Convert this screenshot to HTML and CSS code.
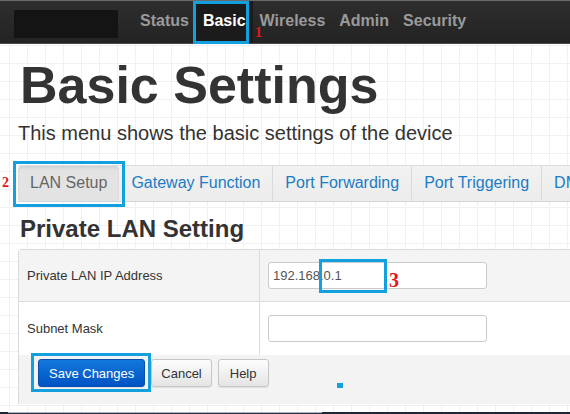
FILE: index.html
```html
<!DOCTYPE html>
<html lang="en">
<head>
<meta charset="utf-8">
<title>Basic Settings</title>
<link rel="stylesheet" href="styles.css">
</head>
<body>
<header class="navbar">
  <div class="brand"></div>
  <nav class="nav">
    <a class="nav-link">Status</a>
    <a class="nav-link active">Basic<span class="callout callout-nav"></span><span class="mark mark-1">1</span></a>
    <a class="nav-link">Wireless</a>
    <a class="nav-link">Admin</a>
    <a class="nav-link">Security</a>
  </nav>
</header>

<main class="page">
  <h1 class="title">Basic Settings</h1>
  <p class="lead">This menu shows the basic settings of the device</p>

  <div class="tabs-wrap">
    <span class="mark mark-2">2</span>
    <span class="callout callout-tab"></span>
    <div class="tabs">
      <a class="tab active">LAN Setup</a>
      <a class="tab">Gateway Function</a>
      <a class="tab">Port Forwarding</a>
      <a class="tab">Port Triggering</a>
      <a class="tab">DMZ</a>
    </div>
  </div>

  <h2 class="section">Private LAN Setting</h2>

  <div class="panel">
    <div class="row shaded">
      <div class="label">Private LAN IP Address</div>
      <div class="field">
        <div class="input">192.168.0.1<span class="callout callout-ip"></span><span class="mark mark-3">3</span></div>
      </div>
    </div>
    <div class="row">
      <div class="label">Subnet Mask</div>
      <div class="field">
        <div class="input"></div>
      </div>
    </div>
    <div class="actions">
      <button class="btn btn-primary">Save Changes<span class="callout callout-save"></span></button>
      <button class="btn btn-cancel">Cancel</button>
      <button class="btn btn-help">Help</button>
      <span class="dot"></span>
    </div>
  </div>
</main>

<div class="taskbar"><div class="taskbar-seg"></div></div>
</body>
</html>
```

FILE: styles.css
```css
* { box-sizing: border-box; }

html, body {
  margin: 0;
  padding: 0;
}

body {
  width: 570px;
  height: 414px;
  overflow: hidden;
  font-family: "Liberation Sans", Arial, Helvetica, sans-serif;
  color: #333;
  background-color: #fff;
  background-image:
    linear-gradient(to right, #f1f1f1 1px, transparent 1px),
    linear-gradient(to bottom, #f1f1f1 1px, transparent 1px);
  background-size: 18px 18px;
  background-position: 9px 9px;
}

/* ---------- top navbar ---------- */
.navbar {
  height: 44px;
  display: flex;
  align-items: stretch;
  background: linear-gradient(to bottom, #2e2e2e 0%, #232323 100%);
  border-top: 1px solid #6a6a6a;
  border-bottom: 1px solid #4a4a4a;
}

.brand {
  width: 104px;
  height: 28px;
  margin: 9px 15px 0 14px;
  background: #141414;
}

.nav {
  display: flex;
  align-items: stretch;
}

.nav-link {
  position: relative;
  display: flex;
  align-items: center;
  padding: 0 7px 2px;
  font-size: 16px;
  font-weight: bold;
  color: #9a9a9a;
  text-decoration: none;
}

.nav-link.active {
  color: #fff;
  background: #1b1b1b;
}

/* ---------- annotations ---------- */
.callout {
  position: absolute;
  border: 3px solid #12a0de;
  pointer-events: none;
  z-index: 2;
}

.callout-nav {
  left: -3px;
  top: 0;
  width: 56px;
  height: 43px;
}

.callout-tab {
  left: -5px;
  top: -4px;
  width: 112px;
  height: 46px;
}

.callout-ip {
  left: 50px;
  top: -4px;
  width: 68px;
  height: 34px;
}

.callout-save {
  left: -8px;
  top: -7px;
  right: -7px;
  bottom: -6px;
}

.mark {
  position: absolute;
  font-family: "Liberation Serif", "Times New Roman", serif;
  font-weight: bold;
  color: #e3161b;
}

.mark-1 {
  left: 59px;
  top: 25px;
  font-size: 14px;
  line-height: 14px;
}

.mark-2 {
  left: -16px;
  top: 11px;
  font-size: 14px;
  line-height: 14px;
}

.mark-3 {
  left: 120px;
  top: 7px;
  font-size: 20px;
  line-height: 20px;
}

/* ---------- page ---------- */
.page {
  padding-left: 18px;
}

.title {
  margin: 11px 0 0 2px;
  font-size: 52px;
  line-height: 60px;
  font-weight: bold;
  color: #333;
}

.lead {
  margin: 6px 0 0 0;
  font-size: 20px;
  line-height: 24px;
  color: #333;
}

.tabs-wrap {
  position: relative;
  margin-top: 20px;
}

.tabs {
  display: flex;
  height: 37px;
  background: linear-gradient(to bottom, #f2f2f2, #ececec);
  border-top: 1px solid #dcdcdc;
  border-bottom: 1px solid #d6d6d6;
  white-space: nowrap;
  overflow: hidden;
}

.tab {
  flex: none;
  display: flex;
  align-items: center;
  padding: 0 12px 1px;
  font-size: 16px;
  color: #1a7cc5;
  border-right: 1px solid #dadada;
  text-decoration: none;
}

.tab.active {
  color: #666;
  background: #e3e3e3;
  border-right: none;
  border-radius: 4px;
  box-shadow: inset 0 2px 3px rgba(0, 0, 0, 0.08);
}

.section {
  margin: 13px 0 0 2px;
  font-size: 24px;
  line-height: 28px;
  font-weight: bold;
  color: #333;
}

/* ---------- panel ---------- */
.panel {
  margin-top: 6px;
  border: 1px solid #dadada;
  border-right: none;
  border-bottom: none;
  border-radius: 4px 0 0 0;
}

.row {
  display: flex;
  height: 52px;
  background: #fff;
  border-bottom: 1px solid #dcdcdc;
}

.row.shaded {
  background: #f4f4f4;
}

.row + .row {
  height: 53px;
  border-bottom: none;
}

.label {
  width: 241px;
  flex: none;
  display: flex;
  align-items: center;
  padding-left: 8px;
  font-size: 13px;
  color: #333;
  border-right: 1px solid #dcdcdc;
}

.field {
  flex: 1;
  display: flex;
  align-items: center;
  padding-left: 8px;
}

.input {
  position: relative;
  width: 219px;
  height: 27px;
  display: flex;
  align-items: center;
  padding: 0 4px;
  font-size: 13px;
  color: #555;
  background: #fff;
  border: 1px solid #cbcbcb;
  border-radius: 3px;
}

.actions {
  position: relative;
  display: flex;
  gap: 6px;
  height: 49px;
  padding: 4px 0 0 19px;
  background: #f3f3f3;
}

.btn {
  position: relative;
  height: 28px;
  padding: 0 10px;
  white-space: nowrap;
  font-family: "Liberation Sans", Arial, Helvetica, sans-serif;
  font-size: 13px;
  color: #333;
  background: linear-gradient(to bottom, #fdfdfd, #e4e4e4);
  border: 1px solid #c6c6c6;
  border-radius: 3px;
  box-shadow: 0 1px 1px rgba(0, 0, 0, 0.08);
}

.btn-primary {
  padding: 0 10px;
  color: #fff;
  background: linear-gradient(to bottom, #1378dd, #0053c3);
  border-color: #0a4fb0;
}

.btn-cancel {
  padding: 0 9px;
}

.btn-help {
  padding: 0 11px;
}

.dot {
  position: absolute;
  left: 318px;
  top: 28px;
  width: 6px;
  height: 5px;
  background: #12a0de;
}

/* ---------- bottom strip ---------- */
.taskbar {
  margin-top: 8px;
  height: 3px;
  background: #1d2636;
}

.taskbar-seg {
  margin-left: 8px;
  width: 314px;
  height: 3px;
  background: linear-gradient(to bottom, #aeb4bf 0, #aeb4bf 1px, #2a3446 1px);
}
```
